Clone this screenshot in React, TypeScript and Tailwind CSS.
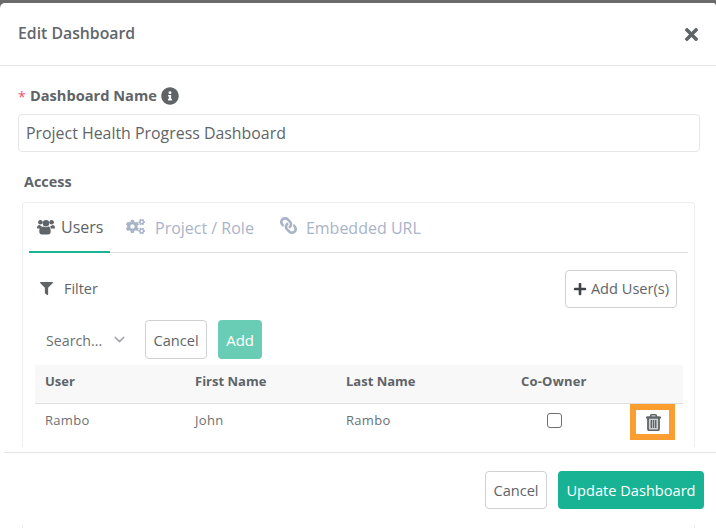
import React from "react";
import { FaCogs, FaLink, FaFilter, FaPlus, FaInfoCircle, FaTimes } from "react-icons/fa";
import { FiChevronDown } from "react-icons/fi";

function UsersIcon() {
  return (
    <svg width="18" height="16" viewBox="0 0 18 16" fill="currentColor" className="shrink-0">
      <circle cx="3.4" cy="3.2" r="2.3" />
      <circle cx="14.6" cy="3.2" r="2.3" />
      <circle cx="9" cy="4.2" r="3.2" />
      <path d="M0 9.2C0 7.2 1 6.1 2.4 6.1c.9.7 1.5.9 2.5.8-.4.8-.7 1.7-.7 2.7H1C.4 9.600 0 9.600 0 9.200ZM18 9.200c0-2-1-3.100-2.400-3.100-.9.7-1.500.9-2.500.8.400.8.700 1.700.700 2.700H17c.6 0 1 0 1-.4Z" />
      <path d="M5.200 8.300C5.600 7.600 6 7.300 6.500 7.500c1.500 1 3.500 1 5 0 .5-.2.9.1 1.300.8.600 1 .9 2.700.9 4.500 0 1.500-1 2.700-2.500 2.700h-6.400c-1.500 0-2.500-1.200-2.500-2.700 0-1.800.300-3.500.9-4.500Z" />
    </svg>
  );
}

function TrashIcon() {
  return (
    <svg width="15" height="17" viewBox="0 0 15 17" className="text-[#5f6468] mt-[1px] ml-[2px]" fill="none" stroke="currentColor">
      <path d="M2 3.500v11.300c0 .9.600 1.500 1.400 1.500h8.200c.8 0 1.400-.6 1.400-1.500V3.500Z" strokeWidth="1.800" fill="currentColor" fillOpacity="0.3" />
      <path d="M0 3.500h15" strokeWidth="1.800" />
      <path d="M4.700 3V1.700c0-.5.300-.9.800-.9h4c.5 0 .8.400.8.900V3" strokeWidth="1.600" />
      <path d="M5.300 6v8M7.500 6v8M9.700 6v8" strokeWidth="1.400" />
    </svg>
  );
}

export default function App() {
  return (
    <div className="w-[716px] h-[528px] overflow-hidden bg-[#6b6b6b] flex flex-col text-[#5f6468] font-['Open_Sans','Noto_Sans',sans-serif]">
      <div className="h-[3px] shrink-0" />
      <div className="flex-1 min-h-0 bg-white rounded-tl-[5px] rounded-tr-[3px] flex flex-col">
        <div className="h-[63px] shrink-0 border-b border-[#e4e6e8] flex items-center justify-between pl-[18px] pr-[15px]">
          <div className="text-[15.8px] font-semibold text-[#61666a]">Edit Dashboard</div>
          <FaTimes className="text-[#5f6468] text-[19px]" />
        </div>
        <div className="flex-1 min-h-0 flex flex-col">
          <div className="pl-[18px] pr-[16px] flex flex-col">
            <div className="mt-[19px] h-[22px] flex items-center text-[14.6px] font-bold text-[#5f6468]">
              <span className="text-[#f1536e] w-[12px] text-[14px] font-normal">*</span>
              <span>Dashboard Name</span>
              <FaInfoCircle className="ml-[4px] text-[18px]" />
            </div>
            <div className="mt-[7px] h-[38px] border border-[#e4e6e8] rounded-[4px] flex items-center pl-[7px] text-[15.9px] text-[#5f6468]">
              <span className="mt-[2px]">Project Health Progress Dashboard</span>
            </div>
            <div className="mt-[20px] ml-[6px] h-[20px] flex items-center text-[14.4px] font-bold text-[#5f6468]">Access</div>
          </div>
          <div className="mt-[10px] ml-[22px] mr-[21px] h-[245px] border border-b-0 border-[#eceef0] rounded-t-[4px] flex flex-col px-[6px]">
            <div className="h-[50px] shrink-0 border-b border-[#dcdee0] flex items-stretch text-[16px]">
              <div className="w-[81px] border-b-2 border-[#18b394] -mb-px flex items-center pl-[8px] gap-[6px] text-[#5f6468]">
                <UsersIcon />
                <span>Users</span>
              </div>
              <div className="ml-[16px] flex items-center gap-[10px] text-[#a9b4c8]">
                <FaCogs className="text-[19px] -mt-[3px]" />
                <span>Project / Role</span>
              </div>
              <div className="ml-[26px] flex items-center gap-[9px] text-[#a9b4c8]">
                <FaLink className="text-[17px] -mt-[4px] -scale-x-100" />
                <span>Embedded URL</span>
              </div>
            </div>
            <div className="mt-[17px] h-[38px] flex items-center justify-between pl-[11px] pr-[11px]">
              <div className="flex items-center gap-[11px] text-[14.4px]">
                <FaFilter className="text-[13px]" />
                <span>Filter</span>
              </div>
              <button className="h-[38px] w-[112px] border border-[#cfd1d3] rounded-[4px] flex items-center justify-center gap-[4px] text-[14.6px]">
                <FaPlus className="text-[14px] text-[#3f4347]" />
                <span>Add User(s)</span>
              </button>
            </div>
            <div className="mt-[12px] h-[39px] flex items-center pl-[17px]">
              <span className="text-[14.2px] text-[#6b7074] mt-[2px]">Search...</span>
              <FiChevronDown className="ml-[9px] text-[17px] text-[#a2a5a8]" />
              <button className="ml-[17px] h-[39px] w-[62px] pt-[2px] border border-[#cfd1d3] rounded-[4px] text-[14.6px]">Cancel</button>
              <button className="ml-[11px] h-[39px] w-[44px] pt-[2px] rounded-[4px] bg-[#69cdb5] text-white text-[15px]">Add</button>
            </div>
            <div className="mt-[6px] ml-[6px] mr-[5px] flex flex-col text-[13px]">
              <div className="h-[39px] bg-[#f8f8f8] border-b border-[#dedfe0] flex items-center font-bold text-[#5f6468]">
                <div className="w-[150px] pl-[10px] -mt-[5px]">User</div>
                <div className="w-[151px] pl-[10px] -mt-[5px]">First Name</div>
                <div className="w-[154px] pl-[10px] -mt-[5px]">Last Name</div>
                <div className="w-[100px] pl-[31px] -mt-[5px] tracking-[0.2px]">Co-Owner</div>
              </div>
              <div className="h-[36px] flex items-start tracking-[0.3px] text-[#6b7074]">
                <div className="w-[150px] pl-[10px] mt-[7px]">Rambo</div>
                <div className="w-[151px] pl-[10px] mt-[7px]">John</div>
                <div className="w-[154px] pl-[10px] mt-[7px]">Rambo</div>
                <div className="w-[193px] flex items-start">
                  <div className="ml-[57px] mt-[9px] w-[15px] h-[15px] border border-[#6b7074] rounded-[3px] shrink-0" />
                  <div className="ml-[68px] w-[45px] h-[36px] border-[6px] border-[#fb9e32] flex items-center justify-center shrink-0">
                    <TrashIcon />
                  </div>
                </div>
              </div>
            </div>
          </div>
        </div>
        <div className="ml-[4px] h-[73px] shrink-0 border-t border-[#e4e6e8] flex justify-end gap-[11px] pt-[18px] pr-[12px] bg-white">
          <button className="h-[38px] w-[62px] pt-[2px] border border-[#cfd1d3] rounded-[4px] text-[14.6px]">Cancel</button>
          <button className="h-[38px] w-[146px] pt-[2px] rounded-[4px] bg-[#18b394] text-white text-[14.6px]">Update Dashboard</button>
        </div>
        <div className="h-[3px] shrink-0 ml-[22px] mr-[21px] border-x border-[#eceef0]" />
      </div>
    </div>
  );
}
